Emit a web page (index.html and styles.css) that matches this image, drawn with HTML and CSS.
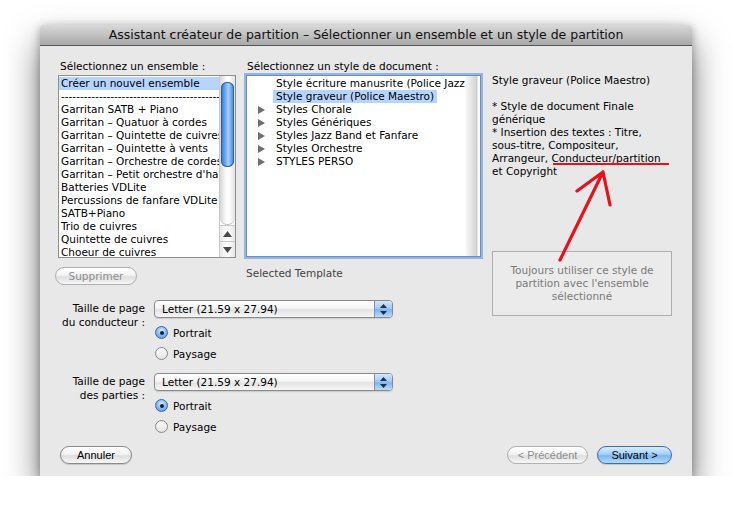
FILE: index.html
```html
<!DOCTYPE html>
<html lang="fr">
<head>
  <meta charset="UTF-8" />
  <title>Assistant créateur de partition</title>
  <link rel="stylesheet" href="styles.css">
</head>
<body>
  <div class="window">
    <div class="titlebar">Assistant <span class="redmark"></span>créateur de partition – Sélectionner un ensemble et un style de partition</div>

    <div class="content">
      <div class="left">
        <div class="lists">
          <div class="col col-ens">
            <div class="label">Sélectionnez un ensemble :</div>
            <div class="listbox">
              <ul class="items">
                <li class="sel">Créer un nouvel ensemble</li>
                <li>--------------------------------------------</li>
                <li>Garritan SATB + Piano</li>
                <li>Garritan – Quatuor à cordes</li>
                <li>Garritan – Quintette de cuivres</li>
                <li>Garritan – Quintette à vents</li>
                <li>Garritan – Orchestre de cordes</li>
                <li>Garritan – Petit orchestre d'harmonie</li>
                <li>Batteries VDLite</li>
                <li>Percussions de fanfare VDLite</li>
                <li>SATB+Piano</li>
                <li>Trio de cuivres</li>
                <li>Quintette de cuivres</li>
                <li>Choeur de cuivres</li>
              </ul>
              <div class="scrollbar">
                <div class="track"><div class="thumb"></div></div>
                <div class="arrow-btn">
                  <svg width="9" height="6" viewBox="0 0 9 6"><path d="M4.5 0 L9 6 L0 6 Z" fill="#4a4a4a"/></svg>
                </div>
                <div class="arrow-btn">
                  <svg width="9" height="6" viewBox="0 0 9 6"><path d="M0 0 L9 0 L4.5 6 Z" fill="#4a4a4a"/></svg>
                </div>
              </div>
            </div>
            <button class="btn btn-del" disabled>Supprimer</button>
          </div>

          <div class="col col-style">
            <div class="label">Sélectionnez un style de document :</div>
            <div class="outline">
              <ul class="tree">
                <li><span class="name">Style écriture manusrite (Police Jazz)</span></li>
                <li><span class="name sel">Style graveur (Police Maestro)</span></li>
                <li><span class="tri"></span><span class="name">Styles Chorale</span></li>
                <li><span class="tri"></span><span class="name">Styles Génériques</span></li>
                <li><span class="tri"></span><span class="name">Styles Jazz Band et Fanfare</span></li>
                <li><span class="tri"></span><span class="name">Styles Orchestre</span></li>
                <li><span class="tri"></span><span class="name">STYLES PERSO</span></li>
              </ul>
              <div class="edge"></div>
            </div>
            <div class="template">Selected Template</div>
          </div>
        </div>

        <div class="pagesize">
          <div class="size-row">
            <div class="size-label">Taille de page<br>du conducteur :</div>
            <div class="size-ctrl">
              <div class="popup">
                <span class="value">Letter (21.59 x 27.94)</span>
                <span class="arrows">
                  <svg width="7" height="11" viewBox="0 0 7 11"><path d="M3.5 0 L7 4 L0 4 Z M0 7 L7 7 L3.5 11 Z" fill="#1d2f4a"/></svg>
                </span>
              </div>
              <div class="radios">
                <div class="radio-row"><span class="radio on"></span>Portrait</div>
                <div class="radio-row"><span class="radio"></span>Paysage</div>
              </div>
            </div>
          </div>
          <div class="size-row">
            <div class="size-label">Taille de page<br>des parties :</div>
            <div class="size-ctrl">
              <div class="popup">
                <span class="value">Letter (21.59 x 27.94)</span>
                <span class="arrows">
                  <svg width="7" height="11" viewBox="0 0 7 11"><path d="M3.5 0 L7 4 L0 4 Z M0 7 L7 7 L3.5 11 Z" fill="#1d2f4a"/></svg>
                </span>
              </div>
              <div class="radios">
                <div class="radio-row"><span class="radio on"></span>Portrait</div>
                <div class="radio-row"><span class="radio"></span>Paysage</div>
              </div>
            </div>
          </div>
        </div>
      </div>

      <div class="right">
        <div class="desc">
          <p>Style graveur (Police Maestro)</p>
          <p>* Style de document Finale<br>générique<br>* Insertion des textes : Titre,<br>sous-titre, Compositeur,<br>Arrangeur, Conducteur/partition<br>et Copyright</p>
        </div>
        <div class="always">Toujours utiliser ce style de partition avec l'ensemble sélectionné</div>
        <svg class="annot" width="180" height="210" viewBox="0 0 180 210">
          <path d="M61 105 L177 105" stroke="#e8101a" stroke-width="2.2" fill="none"/>
          <path d="M68 201 L111 113 M85 132 L111 113 L118 146" stroke="#e8101a" stroke-width="3.2" fill="none" stroke-linecap="round" stroke-linejoin="round"/>
        </svg>
      </div>
    </div>

    <div class="footer">
      <button class="btn">Annuler</button>
      <div class="nav">
        <button class="btn" disabled>&lt; Précédent</button>
        <button class="btn btn-default">Suivant &gt;</button>
      </div>
    </div>
  </div>
</body>
</html>
```

FILE: styles.css
```css
body {
  margin: 0;
  background: #fff;
  font-family: "DejaVu Sans", sans-serif;
  font-size: 10.5px;
  color: #000;
}
ul {
  list-style: none;
  margin: 0;
  padding: 0;
}
.window {
  width: 652px;
  height: 451px;
  margin: 25px 0 0 40px;
  background: #e8e8e8;
  border-radius: 4px 4px 0 0;
  box-shadow: 0 18px 34px rgba(0,0,0,0.55), 0 2px 10px rgba(0,0,0,0.3);
  display: flex;
  flex-direction: column;
}
.titlebar {
  height: 20px;
  line-height: 20px;
  text-align: center;
  font-size: 12.5px;
  color: #111;
  background: linear-gradient(#d9d9d9, #a9a9a9);
  border-bottom: 1px solid #565656;
  border-radius: 4px 4px 0 0;
}
.redmark {
  display: inline-block;
  width: 2px;
  height: 2px;
  background: #e00;
  margin-right: -2px;
  vertical-align: 4px;
}
.content {
  flex: 1;
  display: flex;
  padding-top: 13px;
}
.left {
  margin-left: 18px;
  width: 424px;
}
.lists {
  display: flex;
  gap: 9px;
}
.label {
  height: 16px;
  line-height: 14px;
  padding-left: 2px;
  white-space: nowrap;
}
.col-ens {
  width: 178px;
}
.col-style {
  width: 237px;
}

/* ensemble list */
.listbox {
  height: 183px;
  border: 1px solid #8e8e8e;
  background: #fff;
  display: flex;
  box-sizing: border-box;
}
.items {
  flex: 1;
  overflow: hidden;
  padding-top: 1px;
}
.items li {
  height: 13px;
  line-height: 13px;
  padding-left: 2px;
  white-space: nowrap;
  overflow: hidden;
}
.items li.sel {
  background: #b5d5ff;
}
.scrollbar {
  width: 15px;
  display: flex;
  flex-direction: column;
  border-left: 1px solid #c8c8c8;
}
.track {
  flex: 1;
  padding: 6px 1px 0 1px;
  background: linear-gradient(to right, #d6d6d6, #fbfbfb 40%, #fff 60%, #e0e0e0);
  border-radius: 0 0 7px 7px;
  border-bottom: 1px solid #c4c4c4;
}
.thumb {
  height: 85px;
  border-radius: 6px;
  background: linear-gradient(to right, #2f6fc9, #86bdf5 45%, #a9d2fa 55%, #3c7fd6);
  box-shadow: inset 0 0 0 1px #2a5fb0;
}
.arrow-btn {
  height: 15px;
  display: flex;
  align-items: center;
  justify-content: center;
  background: linear-gradient(to right, #e8e8e8, #fff 50%, #e6e6e6);
  border-top: 1px solid #c8c8c8;
}

/* style outline */
.outline {
  height: 182px;
  border: 1px solid #6c8cbd;
  box-shadow: 0 0 0 2px #92b7e6;
  background: #fff;
  display: flex;
  box-sizing: border-box;
  margin: 0 1px;
}
.tree {
  flex: 1;
  padding-top: 1px;
  overflow: hidden;
}
.tree li {
  height: 13px;
  line-height: 13px;
  display: flex;
  align-items: center;
  padding-left: 28px;
  white-space: nowrap;
  position: relative;
}
.tree .name {
  padding: 0 0 0 1px;
}
.tree .name.sel {
  background: #b5d5ff;
  margin-left: -2px;
  padding: 0 3px;
}
.tri {
  position: absolute;
  left: 11px;
  top: 3px;
  width: 0;
  height: 0;
  border-left: 7px solid #6f6f6f;
  border-top: 4px solid transparent;
  border-bottom: 4px solid transparent;
}
.edge {
  width: 15px;
  background: linear-gradient(to right, #fafafa, #d4d4d4 75%, #c4c4c4 80%, #f7f7f7 85%, #fff);
}
.template {
  margin-top: 10px;
  line-height: 13px;
  color: #444;
  padding-left: 1px;
}

/* buttons */
.btn {
  height: 18px;
  padding: 0;
  border: 1px solid #8a8a8a;
  border-radius: 9px;
  background: linear-gradient(#fff, #f3f3f3 45%, #dedede 55%, #f7f7f7);
  font-family: "Liberation Sans", sans-serif;
  font-size: 11px;
  color: #000;
  box-shadow: 0 1px 1px rgba(0,0,0,0.15);
}
.btn:disabled {
  color: #8e8e8e;
  border-color: #b0b0b0;
  box-shadow: none;
}
.btn-del {
  width: 82px;
  margin: 9px 0 0 -3px;
  font-family: "DejaVu Sans", sans-serif;
  font-size: 10.5px;
}
.btn-default {
  border-color: #3f6db0;
  background: linear-gradient(#d8ecfd, #a6d0f7 45%, #7ab6f1 55%, #b4dcfd);
}

/* page size */
.pagesize {
  margin-top: 15px;
}
.size-row {
  display: flex;
  gap: 9px;
  margin-bottom: 9px;
}
.size-label {
  width: 87px;
  text-align: right;
  line-height: 14px;
  padding-top: 1px;
  white-space: nowrap;
}
.popup {
  width: 239px;
  height: 18px;
  box-sizing: border-box;
  border: 1px solid #8a8a8a;
  border-radius: 4px;
  background: linear-gradient(#fff, #f4f4f4 45%, #e3e3e3 55%, #f6f6f6);
  display: flex;
  align-items: stretch;
  box-shadow: 0 1px 1px rgba(0,0,0,0.12);
}
.popup .value {
  flex: 1;
  padding-left: 7px;
  line-height: 16px;
}
.popup .arrows {
  width: 17px;
  border-left: 1px solid #7d93b3;
  border-radius: 0 3px 3px 0;
  background: linear-gradient(#d3e7fb, #a3cbf3 45%, #7fb4ec 55%, #b9dbfb);
  display: flex;
  align-items: center;
  justify-content: center;
}
.radios {
  margin-top: 4px;
}
.radio-row {
  height: 21px;
  display: flex;
  align-items: center;
  gap: 5px;
}
.radio {
  width: 13px;
  height: 13px;
  margin-left: 1px;
  box-sizing: border-box;
  border-radius: 50%;
  border: 1px solid #8a8a8a;
  background: linear-gradient(#fdfdfd, #e4e4e4);
  display: flex;
  align-items: center;
  justify-content: center;
}
.radio.on {
  border-color: #3e64a0;
  background: radial-gradient(circle at 50% 35%, #d9ecfd, #7ab3ef 60%, #4f8fd9);
}
.radio.on::after {
  content: "";
  width: 4px;
  height: 4px;
  border-radius: 50%;
  background: #10203a;
}

/* right column */
.right {
  margin-left: 10px;
  width: 180px;
  position: relative;
}
.desc {
  height: 192px;
  padding-top: 15px;
  box-sizing: border-box;
  line-height: 13px;
  white-space: nowrap;
}
.desc p {
  margin: 0 0 13px 0;
}
.always {
  height: 65px;
  box-sizing: border-box;
  border: 1px solid #adadad;
  background: #ebebeb;
  color: #7a7a7a;
  text-align: center;
  line-height: 13px;
  display: flex;
  align-items: center;
  justify-content: center;
  padding: 0 8px;
}
.annot {
  position: absolute;
  left: 0;
  top: 0;
}

/* footer */
.footer {
  display: flex;
  justify-content: space-between;
  padding: 0 20px 13px 20px;
}
.footer .btn {
  width: 72px;
}
.nav {
  display: flex;
  gap: 9px;
}
.nav .btn {
  width: 81px;
}
.nav .btn-default {
  width: 75px;
}
```
